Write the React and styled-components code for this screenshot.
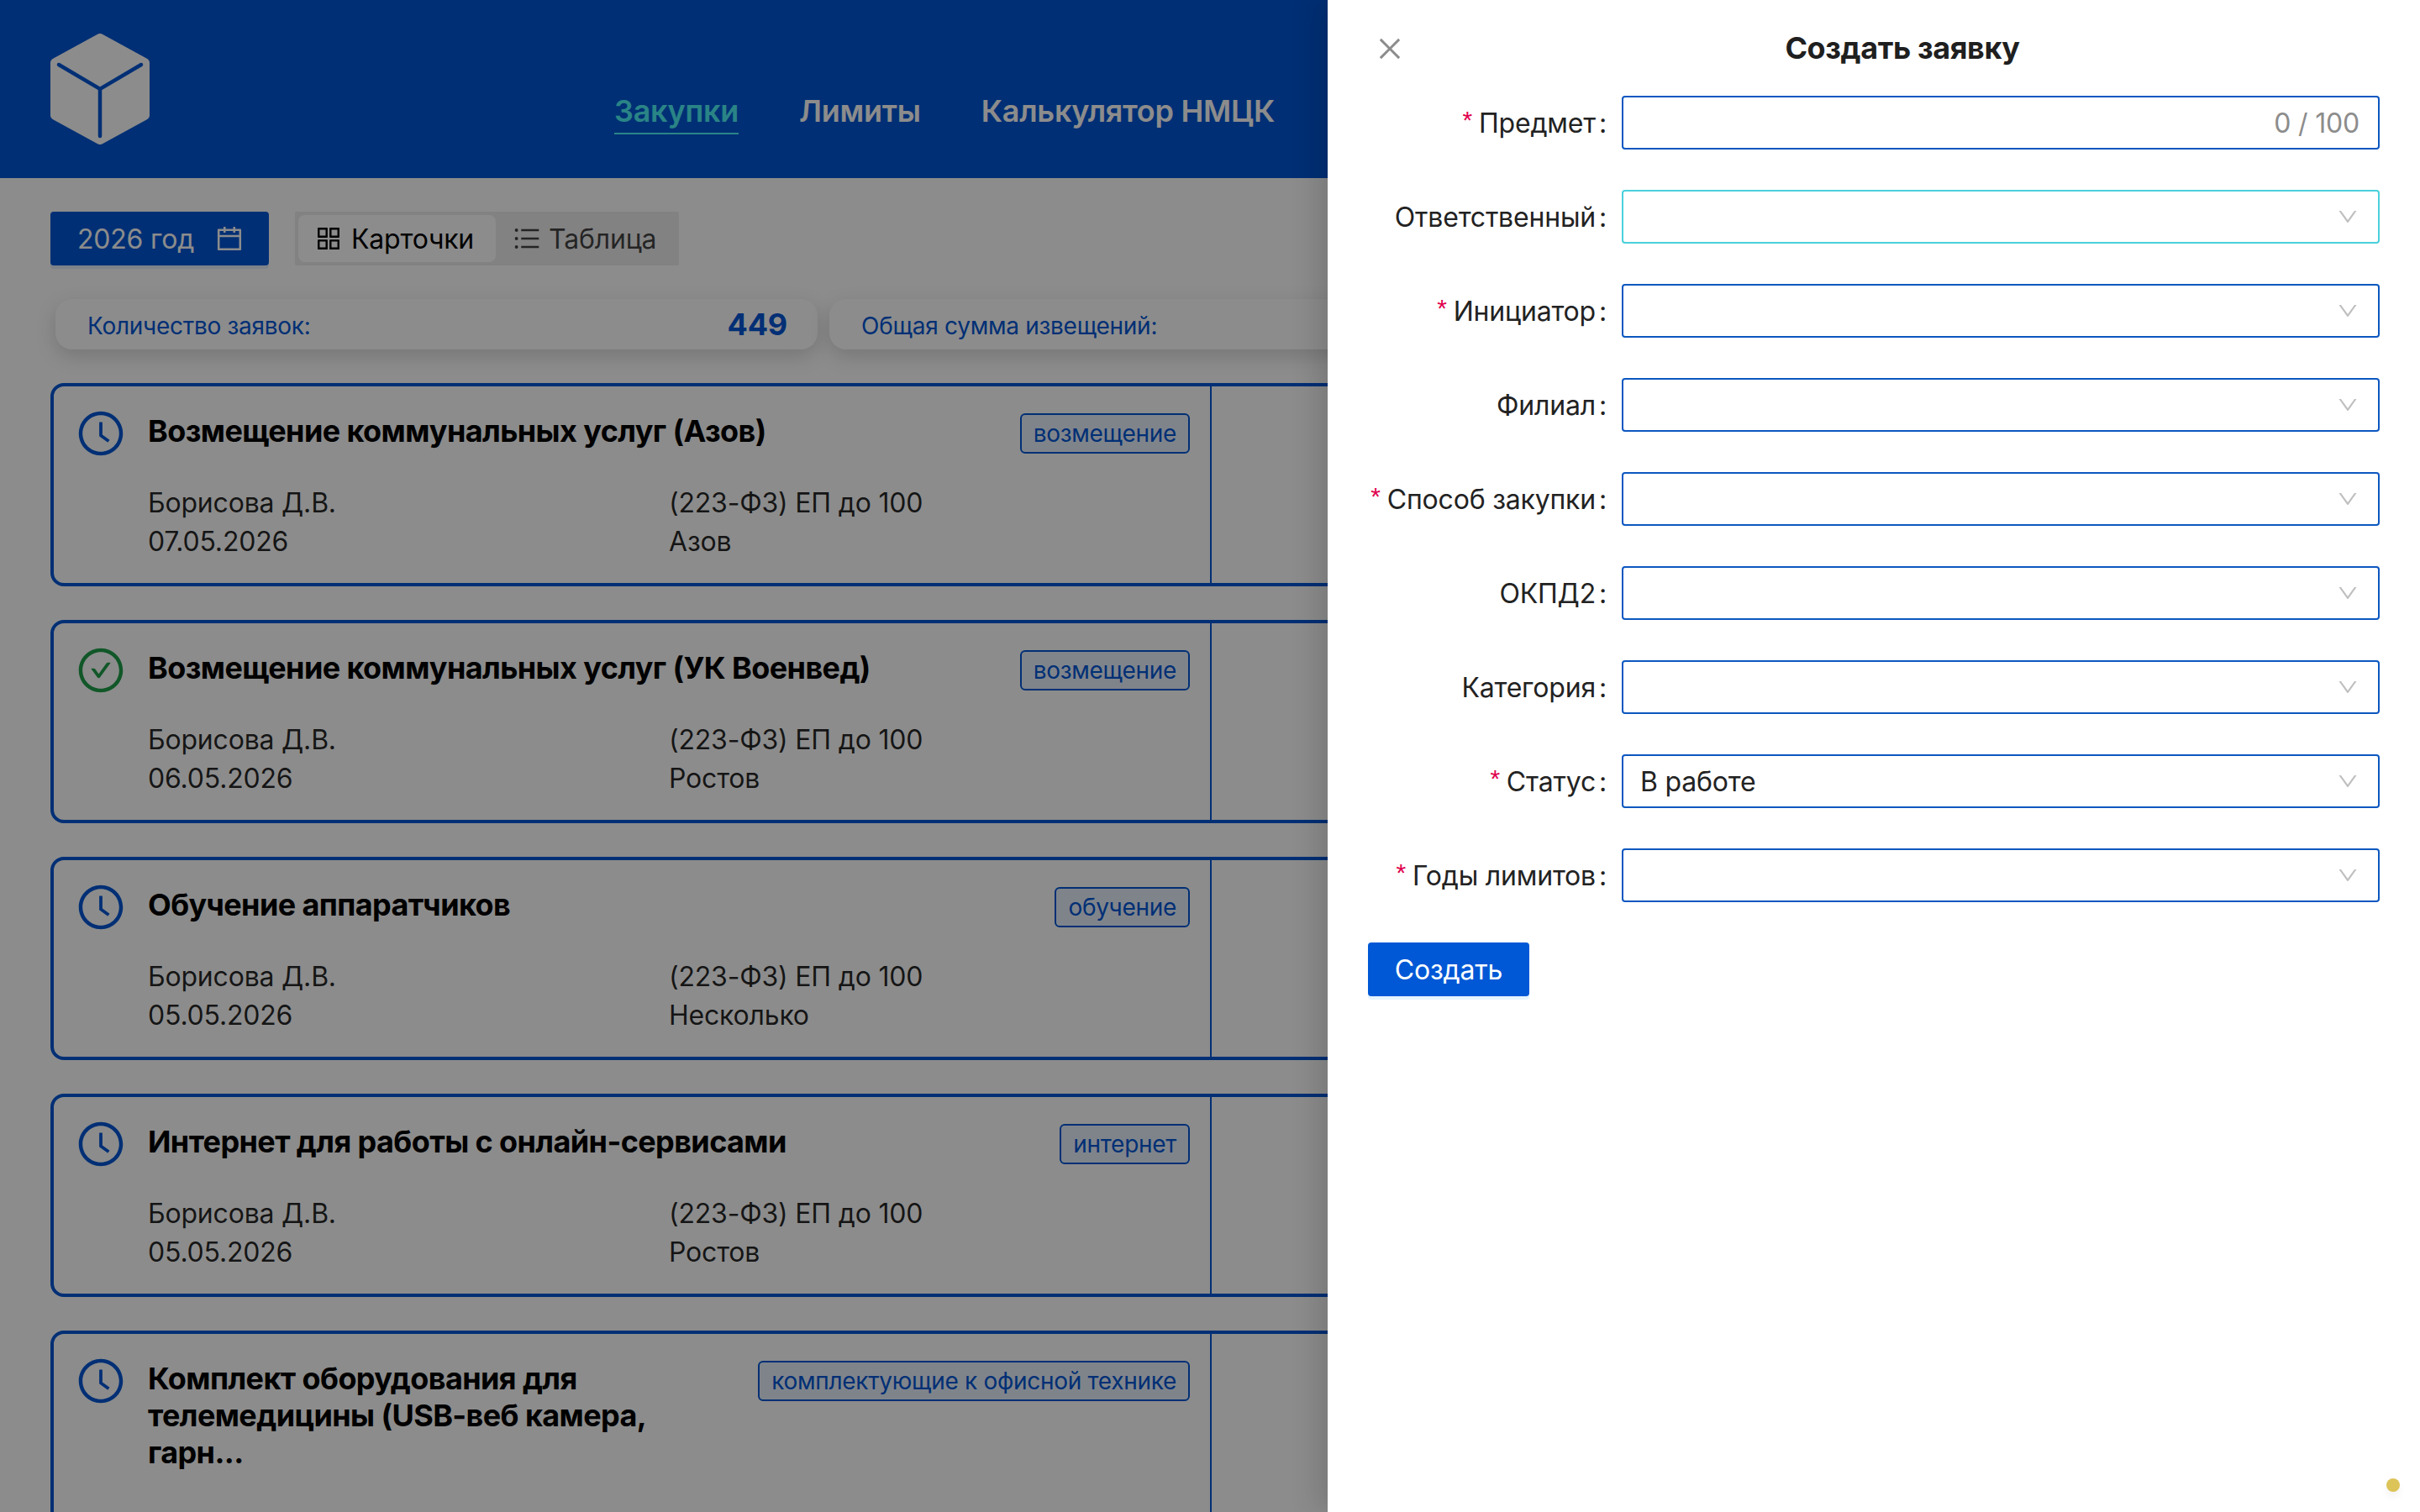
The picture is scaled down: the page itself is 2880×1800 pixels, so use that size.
import React from "react";
import styled, { createGlobalStyle } from "styled-components";
import {
  AiOutlineAppstore,
  AiOutlineUnorderedList,
  AiOutlineCalendar,
  AiOutlineClockCircle,
  AiOutlineCheckCircle,
  AiOutlineClose,
  AiOutlineDown,
} from "react-icons/ai";

const BLUE = "#0057d5";

const Global = createGlobalStyle`
  html, body { margin: 0; padding: 0; background: #fff; }
  body { font-family: Inter, "Noto Sans", sans-serif; color: #222; letter-spacing: -0.2px; }
  button { letter-spacing: inherit; }
  * { box-sizing: border-box; }
`;

const Page = styled.div`
  position: relative;
  width: 2880px;
  height: 1800px;
  overflow: hidden;
  background: #fff;
`;

const Header = styled.header`
  display: flex;
  align-items: flex-end;
  height: 212px;
  padding: 0 0 52px 60px;
  background: ${BLUE};
`;

const LogoMark = styled.svg`
  flex: none;
  width: 118px;
  height: 132px;
  margin-bottom: -12px;
  align-self: flex-end;
`;

const Nav = styled.nav`
  display: flex;
  gap: 72px;
  margin-left: 553px;
`;

const NavItem = styled.a`
  font-size: 36px;
  font-weight: 600;
  line-height: 48px;
  letter-spacing: -0.25px;
  padding-bottom: 2px;
  border-bottom: 2px solid ${(p) => (p.$active ? "#4ef0f5" : "transparent")};
  color: ${(p) => (p.$active ? "#4ef0f5" : "#fff")};
`;

const Content = styled.main`
  padding: 40px 0 0 60px;
`;

const Toolbar = styled.div`
  display: flex;
  gap: 31px;
  height: 64px;
`;

const YearButton = styled.button`
  display: flex;
  align-items: center;
  gap: 24px;
  width: 260px;
  height: 64px;
  padding: 0 0 0 32px;
  border: 0;
  border-radius: 4px;
  background: ${BLUE};
  color: #fff;
  font: 400 32px Inter, sans-serif;
  box-shadow: 0 4px 0 rgba(0, 87, 213, 0.1);
`;

const Segmented = styled.div`
  display: flex;
  width: 457px;
  padding: 4px;
  background: #ededed;
  border-radius: 2px;
`;

const Segment = styled.div`
  display: flex;
  align-items: center;
  gap: ${(p) => (p.$active ? "9px" : "8px")};
  padding: 0 ${(p) => (p.$active ? "26px" : "23px")} 0 ${(p) => (p.$active ? "18px" : "19px")};
  border-radius: 8px;
  font-size: 32px;
  background: ${(p) => (p.$active ? "#fff" : "transparent")};
  color: ${(p) => (p.$active ? "#000" : "rgba(0,0,0,.72)")};
`;

const Stats = styled.div`
  display: flex;
  gap: 14px;
  margin: 40px 0 0 6px;
`;

const StatCard = styled.div`
  display: flex;
  flex: none;
  width: 907px;
  height: 60px;
  align-items: center;
  justify-content: space-between;
  padding: 0 36px 0 38px;
  border-radius: 20px;
  background: #fff;
  box-shadow: 0 8px 24px rgba(0, 0, 0, 0.16);
  color: ${BLUE};
`;

const StatLabel = styled.span`
  font-size: 28px;
  letter-spacing: -0.28px;
  margin-top: 4px;
`;

const StatValue = styled.span`
  font-size: 36px;
  font-weight: 700;
`;

const Cards = styled.div`
  display: flex;
  flex-direction: column;
  gap: 40px;
  margin-top: 40px;
`;

const Card = styled.article`
  display: flex;
  width: 2760px;
  min-height: 242px;
  border: 4px solid ${BLUE};
  border-radius: 16px;
  background: #fff;
`;

const CardMain = styled.div`
  display: flex;
  flex: none;
  gap: 30px;
  width: 1378px;
  padding: 30px 24px 26px 30px;
  border-right: 2px solid ${BLUE};
`;

const StatusIcon = styled.div`
  flex: none;
  width: 52px;
  height: 52px;
  font-size: 60px;
  line-height: 0;
  color: ${(p) => (p.$done ? "#1f9e4a" : BLUE)};
  & > svg {
    margin: -4px;
  }
`;

const CardBody = styled.div`
  flex: 1;
  min-width: 0;
`;

const TitleRow = styled.div`
  display: flex;
  justify-content: space-between;
  align-items: flex-start;
  gap: 24px;
`;

const CardTitle = styled.h3`
  margin: 1px 0 -1px;
  font-size: 36px;
  font-weight: 650;
  letter-spacing: -0.6px;
  line-height: 44px;
  color: #000;
`;

const Tag = styled.span`
  flex: none;
  height: 48px;
  margin: 2px 0 -6px;
  padding: 0 14px;
  border: 2px solid ${BLUE};
  border-radius: 6px;
  background: #e8f1fe;
  color: ${BLUE};
  font-size: 28px;
  letter-spacing: -0.3px;
  line-height: 44px;
`;

const Meta = styled.div`
  display: grid;
  grid-template-columns: 620px 1fr;
  grid-auto-rows: 46px;
  margin-top: 42px;
  font-size: 32px;
  line-height: 46px;
  color: rgba(0, 0, 0, 0.85);
`;

const Overlay = styled.div`
  position: absolute;
  inset: 0;
  background: rgba(0, 0, 0, 0.45);
`;

const Drawer = styled.aside`
  position: absolute;
  top: 0;
  right: 0;
  bottom: 0;
  width: 1300px;
  padding: 0 48px;
  background: #fff;
  box-shadow: -12px 0 32px rgba(0, 0, 0, 0.14);
`;

const DrawerHead = styled.div`
  display: flex;
  align-items: center;
  height: 114px;
`;

const CloseButton = styled.button`
  flex: none;
  width: 68px;
  height: 36px;
  margin-top: 2px;
  padding: 0 0 0 8px;
  border: 0;
  background: none;
  color: #8c8c8c;
  font-size: 36px;
  line-height: 0;
  text-align: left;
`;

const DrawerTitle = styled.h2`
  flex: 1;
  margin: 0;
  text-align: center;
  font-size: 36px;
  font-weight: 650;
  letter-spacing: -0.4px;
  line-height: 48px;
  color: #1f1f1f;
`;

const Form = styled.form`
  display: flex;
  flex-direction: column;
  gap: 48px;
`;

const FormRow = styled.div`
  display: grid;
  grid-template-columns: 302px 1fr;
  align-items: center;
`;

const Label = styled.label`
  display: flex;
  justify-content: flex-end;
  align-items: center;
  padding-top: 2px;
  font-size: 32px;
  line-height: 62px;
  color: #222;
  &::before {
    content: ${(p) => (p.$required ? '"*"' : "none")};
    margin-right: 8px;
    margin-top: -8px;
    color: #e0004d;
    font: 30px "Liberation Sans", sans-serif;
  }
  &::after {
    content: ":";
    margin: 0 18px 0 4px;
  }
`;

const Field = styled.div`
  display: flex;
  align-items: center;
  justify-content: space-between;
  height: 64px;
  padding: 0 22px 0 20px;
  border: 2px solid ${(p) => (p.$hover ? "#4ad0dc" : "#0c57c0")};
  border-radius: 4px;
  background: #fff;
  font-size: 32px;
  color: #222;
`;

const Counter = styled.span`
  margin-left: auto;
  color: #8c8c8c;
`;

const Chevron = styled.span`
  margin-left: auto;
  color: #bfbfbf;
  font-size: 28px;
  line-height: 0;
`;

const SubmitButton = styled.button`
  align-self: flex-start;
  width: 192px;
  height: 64px;
  padding: 0;
  border: 0;
  border-radius: 4px;
  background: #0058d6;
  color: #fff;
  font: 400 32px Inter, sans-serif;
  box-shadow: 0 4px 0 rgba(5, 145, 255, 0.1);
`;

const Dot = styled.span`
  position: absolute;
  right: 24px;
  bottom: 24px;
  width: 16px;
  height: 16px;
  border-radius: 50%;
  background: #dcc458;
  box-shadow: 0 6px 10px rgba(0, 0, 0, 0.05);
`;

const Logo = () => (
  <LogoMark viewBox="0 0 118 132" aria-hidden="true">
    <polygon
      points="59,6 112,35 112,97 59,126 6,97 6,35"
      fill="#fff"
      stroke="#fff"
      strokeWidth="12"
      strokeLinejoin="round"
    />
    <path
      d="M10 37 L59 66 L108 37 M59 66 L59 122"
      fill="none"
      stroke={BLUE}
      strokeWidth="4.5"
      strokeLinecap="round"
    />
  </LogoMark>
);

const cards = [
  { title: "Возмещение коммунальных услуг (Азов)", tag: "возмещение", date: "07.05.2026", place: "Азов" },
  { title: "Возмещение коммунальных услуг (УК Военвед)", tag: "возмещение", date: "06.05.2026", place: "Ростов", done: true },
  { title: "Обучение аппаратчиков", tag: "обучение", date: "05.05.2026", place: "Несколько" },
  { title: "Интернет для работы с онлайн-сервисами", tag: "интернет", date: "05.05.2026", place: "Ростов" },
  { title: "Комплект оборудования для телемедицины (USB-веб камера, гарн...", tag: "комплектующие к офисной технике", date: "05.05.2026", place: "Ростов" },
];

const fields = [
  { label: "Предмет", required: true, counter: "0 / 100" },
  { label: "Ответственный", hover: true },
  { label: "Инициатор", required: true },
  { label: "Филиал" },
  { label: "Способ закупки", required: true },
  { label: "ОКПД2" },
  { label: "Категория" },
  { label: "Статус", required: true, value: "В работе" },
  { label: "Годы лимитов", required: true },
];

export default function App() {
  return (
    <Page>
      <Global />
      <Header>
        <Logo />
        <Nav>
          <NavItem $active>Закупки</NavItem>
          <NavItem>Лимиты</NavItem>
          <NavItem>Калькулятор НМЦК</NavItem>
        </Nav>
      </Header>
      <Content>
        <Toolbar>
          <YearButton>
            2026 год
            <AiOutlineCalendar size={36} />
          </YearButton>
          <Segmented>
            <Segment $active>
              <AiOutlineAppstore size={36} />
              Карточки
            </Segment>
            <Segment>
              <AiOutlineUnorderedList size={36} />
              Таблица
            </Segment>
          </Segmented>
        </Toolbar>
        <Stats>
          <StatCard>
            <StatLabel>Количество заявок:</StatLabel>
            <StatValue>449</StatValue>
          </StatCard>
          <StatCard>
            <StatLabel>Общая сумма извещений:</StatLabel>
          </StatCard>
        </Stats>
        <Cards>
          {cards.map((c) => (
            <Card key={c.title}>
              <CardMain>
                <StatusIcon $done={c.done}>
                  {c.done ? <AiOutlineCheckCircle /> : <AiOutlineClockCircle />}
                </StatusIcon>
                <CardBody>
                  <TitleRow>
                    <CardTitle>{c.title}</CardTitle>
                    <Tag>{c.tag}</Tag>
                  </TitleRow>
                  <Meta>
                    <span>Борисова Д.В.</span>
                    <span>(223-ФЗ) ЕП до 100</span>
                    <span>{c.date}</span>
                    <span>{c.place}</span>
                  </Meta>
                </CardBody>
              </CardMain>
            </Card>
          ))}
        </Cards>
      </Content>
      <Overlay />
      <Drawer>
        <DrawerHead>
          <CloseButton aria-label="Закрыть">
            <AiOutlineClose />
          </CloseButton>
          <DrawerTitle>Создать заявку</DrawerTitle>
        </DrawerHead>
        <Form>
          {fields.map((f) => (
            <FormRow key={f.label}>
              <Label $required={f.required}>{f.label}</Label>
              <Field $hover={f.hover}>
                {f.value}
                {f.counter ? (
                  <Counter>{f.counter}</Counter>
                ) : (
                  <Chevron>
                    <AiOutlineDown />
                  </Chevron>
                )}
              </Field>
            </FormRow>
          ))}
          <SubmitButton type="button">Создать</SubmitButton>
        </Form>
      </Drawer>
      <Dot />
    </Page>
  );
}
